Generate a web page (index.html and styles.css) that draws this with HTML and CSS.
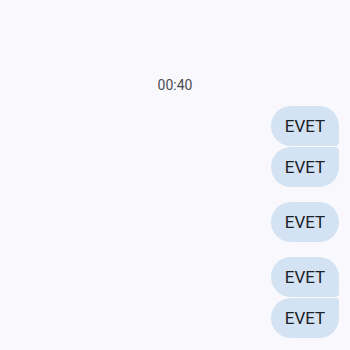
FILE: index.html
```html
<!DOCTYPE html>
<html>
<head>
<meta charset="utf-8">
<link rel="stylesheet" href="styles.css">
</head>
<body>
<div class="chat">
  <div class="time">00:40</div>
  <div class="group">
    <div class="bubble first">EVET</div>
    <div class="bubble last">EVET</div>
  </div>
  <div class="group">
    <div class="bubble">EVET</div>
  </div>
  <div class="group">
    <div class="bubble first">EVET</div>
    <div class="bubble last">EVET</div>
  </div>
</div>
</body>
</html>
```
FILE: styles.css
```css
html, body {
  margin: 0;
  padding: 0;
  background: #f9f9fd;
  width: 350px;
  height: 350px;
  overflow: hidden;
}
.chat {
  display: flex;
  flex-direction: column;
  padding: 76px 11px 0 0;
  font-family: Roboto, "Noto Sans", sans-serif;
}
.time {
  text-align: center;
  font-size: 14px;
  color: #4a4d52;
  line-height: 18px;
  padding-left: 11px;
  margin-bottom: 12px;
}
.group {
  display: flex;
  flex-direction: column;
  align-items: flex-end;
  gap: 1px;
  margin-bottom: 15px;
}
.bubble {
  background: #d3e3f3;
  color: #1d2126;
  font-size: 17px;
  height: 40px;
  line-height: 40px;
  width: 68px;
  text-align: center;
  border-radius: 20px;
  box-sizing: border-box;
}
.bubble.first {
  border-bottom-right-radius: 4px;
}
.bubble.last {
  border-top-right-radius: 4px;
}
```
